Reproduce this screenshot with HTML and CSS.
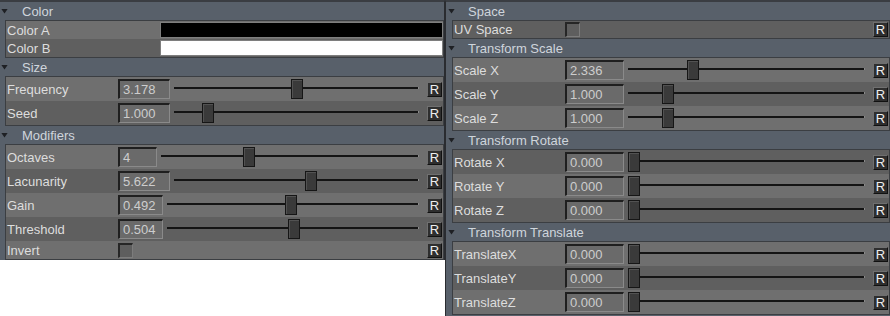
FILE: index.html
```html
<!DOCTYPE html>
<html>
<head>
<meta charset="utf-8">
<link rel="stylesheet" href="styles.css">
</head>
<body>
<div class="app">
  <section class="panel panel-left">
    <div class="hdr"><span class="tri"></span>Color</div>
    <div class="box">
      <div class="row simple light"><span class="lbl lbl-wide">Color A</span><span class="swatch swatch-black"></span></div>
      <div class="row simple dark"><span class="lbl lbl-wide">Color B</span><span class="swatch swatch-white"></span></div>
    </div>
    <div class="hdr"><span class="tri"></span>Size</div>
    <div class="box">
      <div class="row slider light"><span class="lbl">Frequency</span><span class="num w52">3.178</span><div class="track"><span class="knob" style="left:117px"></span></div><span class="rbtn">R</span></div>
      <div class="row slider dark"><span class="lbl">Seed</span><span class="num w52">1.000</span><div class="track"><span class="knob" style="left:28px"></span></div><span class="rbtn">R</span></div>
    </div>
    <div class="hdr"><span class="tri"></span>Modifiers</div>
    <div class="box">
      <div class="row slider light"><span class="lbl">Octaves</span><span class="num w39">4</span><div class="track"><span class="knob" style="left:82px"></span></div><span class="rbtn">R</span></div>
      <div class="row slider dark"><span class="lbl">Lacunarity</span><span class="num w52">5.622</span><div class="track"><span class="knob" style="left:131px"></span></div><span class="rbtn">R</span></div>
      <div class="row slider light"><span class="lbl">Gain</span><span class="num w45">0.492</span><div class="track"><span class="knob" style="left:118px"></span></div><span class="rbtn">R</span></div>
      <div class="row slider dark"><span class="lbl">Threshold</span><span class="num w45">0.504</span><div class="track"><span class="knob" style="left:121px"></span></div><span class="rbtn">R</span></div>
      <div class="row simple light"><span class="lbl">Invert</span><span class="check"></span><span class="spacer"></span><span class="rbtn">R</span></div>
    </div>
  </section>
  <section class="panel panel-right">
    <div class="hdr"><span class="tri"></span>Space</div>
    <div class="box">
      <div class="row simple short dark"><span class="lbl">UV Space</span><span class="check"></span><span class="spacer"></span><span class="rbtn">R</span></div>
    </div>
    <div class="hdr"><span class="tri"></span>Transform Scale</div>
    <div class="box">
      <div class="row slider light"><span class="lbl">Scale X</span><span class="num w59">2.336</span><div class="track"><span class="knob" style="left:59px"></span></div><span class="rbtn">R</span></div>
      <div class="row slider dark"><span class="lbl">Scale Y</span><span class="num w59">1.000</span><div class="track"><span class="knob" style="left:34px"></span></div><span class="rbtn">R</span></div>
      <div class="row slider light"><span class="lbl">Scale Z</span><span class="num w59">1.000</span><div class="track"><span class="knob" style="left:34px"></span></div><span class="rbtn">R</span></div>
    </div>
    <div class="hdr"><span class="tri"></span>Transform Rotate</div>
    <div class="box">
      <div class="row slider dark"><span class="lbl">Rotate X</span><span class="num w59">0.000</span><div class="track"><span class="knob" style="left:0px"></span></div><span class="rbtn">R</span></div>
      <div class="row slider light"><span class="lbl">Rotate Y</span><span class="num w59">0.000</span><div class="track"><span class="knob" style="left:0px"></span></div><span class="rbtn">R</span></div>
      <div class="row slider dark"><span class="lbl">Rotate Z</span><span class="num w59">0.000</span><div class="track"><span class="knob" style="left:0px"></span></div><span class="rbtn">R</span></div>
    </div>
    <div class="hdr"><span class="tri"></span>Transform Translate</div>
    <div class="box">
      <div class="row slider light"><span class="lbl">TranslateX</span><span class="num w59">0.000</span><div class="track"><span class="knob" style="left:0px"></span></div><span class="rbtn">R</span></div>
      <div class="row slider dark"><span class="lbl">TranslateY</span><span class="num w59">0.000</span><div class="track"><span class="knob" style="left:0px"></span></div><span class="rbtn">R</span></div>
      <div class="row slider light"><span class="lbl">TranslateZ</span><span class="num w59">0.000</span><div class="track"><span class="knob" style="left:0px"></span></div><span class="rbtn">R</span></div>
    </div>
  </section>
</div>
</body>
</html>
```
FILE: styles.css
```css
* { box-sizing: border-box; margin: 0; padding: 0; }
html, body { background: #ffffff; }
body {
  margin: 0;
  font-family: "Liberation Sans", Arial, sans-serif;
  font-size: 13px;
}
.app {
  display: flex;
  align-items: flex-start;
  width: 890px;
}
.panel {
  background: #58606a;
  border-top: 2px solid #3a3d42;
}
.panel-left {
  width: 445px;
  border-right: 1px solid #2a2c30;
}
.panel-right {
  width: 445px;
  border-left: 1px solid #2a2c30;
  padding-bottom: 1px;
}
.hdr {
  height: 18px;
  display: flex;
  align-items: center;
  color: #cfd5dc;
}
.tri {
  width: 7px;
  height: 5px;
  margin-left: 1px;
  margin-right: 14px;
  background: #1e2024;
  clip-path: polygon(0 0, 100% 0, 50% 100%);
}
.panel-right .tri { margin-left: 2px; margin-right: 13px; }
.box {
  border: 1px solid #3b3e42;
  margin-left: 5px;
}
.panel-right .box { margin-left: 6px; }
.row {
  display: flex;
  align-items: center;
  padding-left: 1px;
  color: #dddddd;
}
.row.simple { height: 18px; }
.row.short { height: 17px; }
.row.slider { height: 24px; }
.light { background: #6f6f6f; }
.dark { background: #5f5f5f; }
.lbl {
  width: 111px;
  flex: none;
  white-space: nowrap;
}
.lbl-wide { width: 153px; }
.swatch {
  flex: 1;
  height: 16px;
  border: 1px solid #7e7e7e;
}
.swatch-black { background: #000000; }
.swatch-white { background: #ffffff; }
.num {
  flex: none;
  height: 20px;
  border-top: 2px solid #1f1f1f;
  border-left: 2px solid #1f1f1f;
  border-right: 1px solid #8a8a8a;
  border-bottom: 1px solid #8a8a8a;
  background: #6a6a6a;
  color: #cdcdcd;
  padding-left: 3px;
  line-height: 17px;
}
.w39 { width: 39px; }
.w45 { width: 45px; }
.w52 { width: 52px; }
.w59 { width: 59px; }
.track {
  flex: 1;
  height: 24px;
  margin-left: 4px;
  margin-right: 8px;
  position: relative;
}
.track::before {
  content: "";
  position: absolute;
  left: 0;
  right: 0;
  top: 10px;
  height: 2px;
  background: #141414;
  border-right: 1px solid #8a8a8a;
}
.knob {
  position: absolute;
  top: 2px;
  width: 12px;
  height: 20px;
  background: #3a3a3a;
  border: 1px solid #161616;
  box-shadow: inset 1px 1px 0 #525252;
}
.check {
  flex: none;
  width: 15px;
  height: 15px;
  background: #5e5e5e;
  border-top: 2px solid #262626;
  border-left: 2px solid #262626;
  border-right: 1px solid #7c7c7c;
  border-bottom: 1px solid #7c7c7c;
}
.spacer { flex: 1; }
.rbtn {
  flex: none;
  width: 15px;
  height: 15px;
  margin-right: 1px;
  background: #2e2e2e;
  border: 1px solid;
  border-color: #707070 #111111 #111111 #707070;
  color: #eeeeee;
  font-size: 13px;
  line-height: 13px;
  text-align: center;
}
```
